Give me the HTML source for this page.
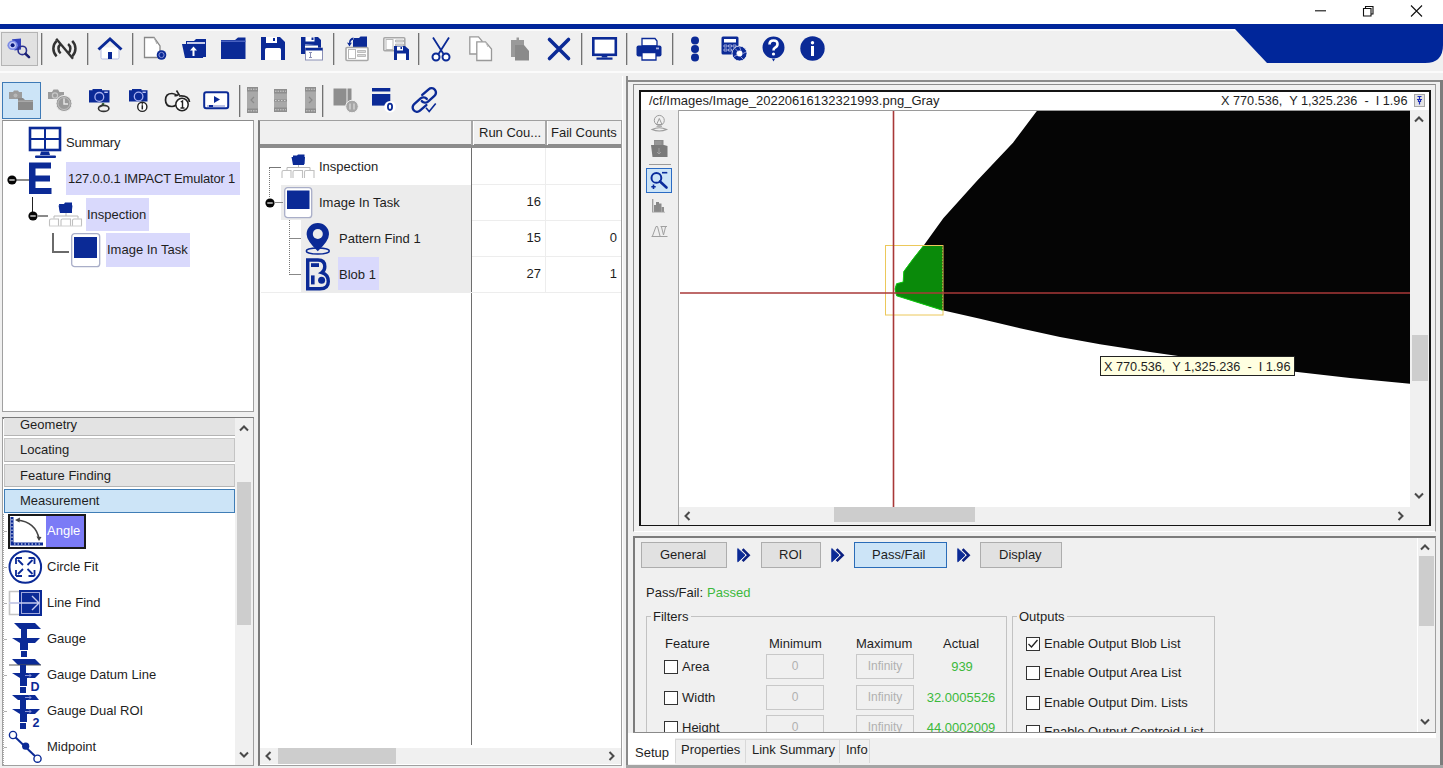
<!DOCTYPE html>
<html><head><meta charset="utf-8">
<style>
*{box-sizing:border-box;margin:0;padding:0}
html,body{width:1443px;height:768px;overflow:hidden}
body{position:relative;background:#f0f0f0;font-family:"Liberation Sans",sans-serif;font-size:13px;color:#1e1e1e}
.a{position:absolute}
.t{position:absolute;white-space:pre;line-height:1}
svg{position:absolute;overflow:visible}
</style></head><body>

<!-- title bar -->
<div class="a" style="left:0;top:0;width:1443px;height:24px;background:#fff"></div>
<svg style="left:1314px;top:5px" width="110" height="14" viewBox="0 0 110 14">
 <path d="M1 5.8H12" stroke="#111" stroke-width="1.1"/>
 <path d="M49.5 3.5h7.5v7.5h-7.5z" fill="none" stroke="#111" stroke-width="1.1"/>
 <path d="M51.5 3.5v-2h7.5v7.5h-2" fill="none" stroke="#111" stroke-width="1.1"/>
 <path d="M97 0.5L108 11.5M108 0.5L97 11.5" stroke="#111" stroke-width="1.1"/>
</svg>
<!-- blue line -->
<div class="a" style="left:0;top:24px;width:1443px;height:5px;background:#00269a"></div>
<div class="a" style="left:0;top:29px;width:1443px;height:2px;background:#fafafa"></div>
<!-- banner -->
<svg style="left:1230px;top:29px" width="213" height="36" viewBox="0 0 213 36">
 <path d="M5 0L37 34H195Q213 34 213 16V0Z" fill="#00269a"/>
</svg>

<!-- toolbars placeholder -->

<!-- TOOLBAR 1 -->
<div class="a" style="left:1px;top:32px;width:37px;height:34px;background:#e1e1e1;border:1px solid #b4b4b4"></div>
<svg style="left:7px;top:37px" width="25" height="23" viewBox="0 0 25 23">
 <path d="M5 2.2L14 1.4L14 12.5L7.5 13.5Z" fill="#3242bd"/>
 <ellipse cx="5.6" cy="8.3" rx="5.2" ry="4.8" fill="#7d8ce6"/>
 <circle cx="5.6" cy="8.3" r="3.3" fill="#c5ccf7"/>
 <circle cx="5.6" cy="8.3" r="2" fill="#0a1a80"/>
 <circle cx="15.3" cy="13.4" r="4.2" fill="none" stroke="#2a3090" stroke-width="1.6"/>
 <path d="M18.6 16.8L22 20.2" stroke="#1a2070" stroke-width="2.6" stroke-linecap="round"/>
</svg>
<div class="a" style="left:41px;top:33px;width:2px;height:32px;background:linear-gradient(90deg,#727272 0 1px,#c8c8c8 1px 2px)"></div>
<svg style="left:52px;top:38px" width="26" height="22" viewBox="0 0 26 22">
 <g fill="none" stroke="#333" stroke-width="2.5">
 <path d="M4.6 2.8A11 11 0 0 0 4.6 18.4"/>
 <path d="M20.2 2.8A11 11 0 0 1 20.2 18.4"/>
 <path d="M8.7 5.9A6 6 0 0 0 8.7 15.3"/>
 <path d="M16.1 5.9A6 6 0 0 1 16.1 15.3"/>
 </g>
 <path d="M4.2 0.8L21 20.8" stroke="#333" stroke-width="2.3"/>
</svg>
<div class="a" style="left:87px;top:33px;width:2px;height:32px;background:linear-gradient(90deg,#727272 0 1px,#c8c8c8 1px 2px)"></div>
<svg style="left:97px;top:37px" width="26" height="23" viewBox="0 0 26 23">
 <path d="M4 10.5V20.5Q4 22 5.5 22H20.5Q22 22 22 20.5V10.5" fill="#fff" stroke="#b7bde0" stroke-width="1"/>
 <path d="M1.5 12.5L13 2L24.5 12.5" fill="none" stroke="#0b2a96" stroke-width="3"/>
 <rect x="11" y="15" width="4" height="7" fill="#0b2a96"/>
</svg>
<div class="a" style="left:132px;top:33px;width:2px;height:32px;background:linear-gradient(90deg,#727272 0 1px,#c8c8c8 1px 2px)"></div>
<svg style="left:143px;top:36px" width="25" height="25" viewBox="0 0 25 25">
 <path d="M1.5 1.5H11L17 10V21.5H1.5Z" fill="#fff" stroke="#888" stroke-width="1.3"/>
 <path d="M11 1.5L14 8" stroke="#aaa" stroke-width="1"/>
 <circle cx="18.5" cy="19" r="4.8" fill="#0b2a96"/>
 <circle cx="18.5" cy="19" r="2.6" fill="none" stroke="#8892d8" stroke-width="1"/>
</svg>
<svg style="left:181px;top:38px" width="27" height="22" viewBox="0 0 27 22">
 <path d="M5 3H13L15 1H25V19H5Z" fill="#0b2a96"/>
 <path d="M6 4H24V6H6Z" fill="#c8cdea"/>
 <path d="M1 6H24L22 20H4Z" fill="#0b2a96"/>
 <path d="M12.5 8.5L9 12.5H11.5V18H13.5V12.5H16Z" fill="#fff"/>
</svg>
<svg style="left:220px;top:37px" width="27" height="23" viewBox="0 0 27 23">
 <path d="M1 3H15L18 0.5H25.5V22H1Z" fill="#0b2a96"/>
 <path d="M1 3.5H25.5V5H1Z" fill="#4a62c0"/>
</svg>
<svg style="left:260px;top:36px" width="26" height="25" viewBox="0 0 26 25">
 <path d="M1 1H20L25 6V24H1Z" fill="#0b2a96"/>
 <rect x="6" y="1" width="11" height="6" fill="#fff"/>
 <rect x="13" y="2" width="2" height="3" fill="#0b2a96"/>
 <path d="M5 13.5Q5 12 6.5 12H19.5Q21 12 21 13.5V24H5Z" fill="#fff"/>
</svg>
<svg style="left:300px;top:36px" width="23" height="25" viewBox="0 0 23 25">
 <path d="M1 1H18L21 4V18H1Z" fill="#0b2a96"/>
 <rect x="5.5" y="1" width="9" height="4.5" fill="#fff"/>
 <rect x="11.5" y="1.5" width="2" height="2.5" fill="#0b2a96"/>
 <path d="M5 9Q5 8.5 5.5 8.5H15" fill="#fff"/>
 <rect x="5" y="9.5" width="13" height="4" fill="#fff"/>
 <rect x="5.5" y="12" width="17" height="12" fill="#fff" stroke="#8a8fb5" stroke-width="1"/>
 <rect x="5.5" y="12" width="17" height="2.5" fill="#0b2a96"/>
 <path d="M9 16.5H12M10.5 16.5V21.5M9 21.5H12" stroke="#8a8fb5" stroke-width="1"/>
</svg>
<div class="a" style="left:333px;top:33px;width:2px;height:32px;background:linear-gradient(90deg,#727272 0 1px,#c8c8c8 1px 2px)"></div>
<svg style="left:345px;top:35px" width="25" height="27" viewBox="0 0 25 27">
 <path d="M9 3H14L15.5 1.5H22V11H9Z" fill="#0b2a96"/>
 <path d="M8 4.5H22V12H8Z" fill="#0b2a96"/>
 <path d="M8.5 2.5Q4 3 4 8L2 7.5L4.5 11.5L7 7.5L5.5 8Q5.5 5 8.5 4.5Z" fill="#0b2a96"/>
 <rect x="1" y="12.5" width="22" height="13" fill="#fff" stroke="#a8a8a8" stroke-width="1.6" rx="1"/>
 <rect x="3.5" y="14.5" width="7" height="9" fill="#fff" stroke="#b8b8b8" stroke-width="1"/>
 <path d="M12.5 15.5h8v2h-8zM12.5 19.5h8v2h-8z" fill="#d8d8d8" stroke="#b0b0b0" stroke-width="0.8"/>
</svg>
<svg style="left:383px;top:37px" width="27" height="23" viewBox="0 0 27 23">
 <rect x="0.8" y="0.8" width="21" height="13" fill="#fff" stroke="#a8a8a8" stroke-width="1.6" rx="1"/>
 <rect x="3" y="2.5" width="7" height="10" fill="#fff" stroke="#b8b8b8" stroke-width="1"/>
 <path d="M12.5 3h8v2h-8zM12.5 7h8v2h-8z" fill="#d8d8d8" stroke="#b0b0b0" stroke-width="0.8"/>
 <path d="M11 9H22L26 12.5V23H11Z" fill="#0b2a96"/>
 <rect x="14" y="9.5" width="6" height="4" fill="#fff"/>
 <rect x="17.5" y="10" width="1.5" height="2" fill="#0b2a96"/>
 <rect x="14" y="16.5" width="9" height="6.5" fill="#fff"/>
</svg>
<div class="a" style="left:418px;top:33px;width:2px;height:32px;background:linear-gradient(90deg,#727272 0 1px,#c8c8c8 1px 2px)"></div>
<svg style="left:431px;top:37px" width="20" height="25" viewBox="0 0 20 25">
 <path d="M2 0.5L12.5 17M18 0.5L7.5 17" stroke="#0b2a96" stroke-width="1.8"/>
 <circle cx="5" cy="20" r="3.5" fill="#fff" stroke="#0b2a96" stroke-width="2"/>
 <circle cx="15" cy="20" r="3.5" fill="#fff" stroke="#0b2a96" stroke-width="2"/>
</svg>
<svg style="left:469px;top:36px" width="24" height="26" viewBox="0 0 24 26">
 <path d="M0.8 0.8H9.5L13 5V18H0.8Z" fill="#fff" stroke="#999" stroke-width="1.3"/>
 <path d="M7.8 5.8H16.5L22.5 13V24.5H7.8Z" fill="#fff" stroke="#999" stroke-width="1.3"/>
 <path d="M16.5 5.8L19 11" stroke="#bbb" stroke-width="1"/>
</svg>
<svg style="left:510px;top:36px" width="20" height="26" viewBox="0 0 20 26">
 <path d="M1 4H6.5V1.5H9V4H14V21H1Z" fill="#9a9a9a"/>
 <path d="M5 9H14L19 15V24.5H5Z" fill="#8a8a8a"/>
</svg>
<svg style="left:547px;top:37px" width="24" height="24" viewBox="0 0 24 24">
 <path d="M2.5 2.5L21.5 21.5M21.5 2.5L2.5 21.5" stroke="#0b2a96" stroke-width="3.6" stroke-linecap="round"/>
</svg>
<div class="a" style="left:581px;top:33px;width:2px;height:32px;background:linear-gradient(90deg,#727272 0 1px,#c8c8c8 1px 2px)"></div>
<svg style="left:592px;top:37px" width="26" height="24" viewBox="0 0 26 24">
 <rect x="1.3" y="1.3" width="22.5" height="16.5" fill="#fff" stroke="#0b2a96" stroke-width="2.6"/>
 <path d="M10 18H15L15.5 20.5H9.5Z" fill="#0b2a96"/>
 <rect x="4.5" y="20.5" width="16" height="2.2" fill="#0b2a96"/>
</svg>
<div class="a" style="left:626px;top:33px;width:2px;height:32px;background:linear-gradient(90deg,#727272 0 1px,#c8c8c8 1px 2px)"></div>
<svg style="left:636px;top:37px" width="27" height="24" viewBox="0 0 27 24">
 <path d="M6 1.5H19L21 4V9H6Z" fill="#fff" stroke="#0b2a96" stroke-width="1.3"/>
 <rect x="0.5" y="8.5" width="25" height="11" rx="2" fill="#0b2a96"/>
 <rect x="20" y="10.5" width="3" height="1.8" fill="#a8b0e0"/>
 <path d="M6 15.5H20V23H6Z" fill="#fff" stroke="#0b2a96" stroke-width="1.3"/>
</svg>
<div class="a" style="left:672px;top:33px;width:2px;height:32px;background:linear-gradient(90deg,#727272 0 1px,#c8c8c8 1px 2px)"></div>
<svg style="left:690px;top:36px" width="10" height="26" viewBox="0 0 10 26">
 <circle cx="5" cy="4.5" r="4" fill="#0b2a96"/><circle cx="5" cy="13" r="4" fill="#0b2a96"/><circle cx="5" cy="21.5" r="4" fill="#0b2a96"/>
</svg>
<svg style="left:721px;top:36px" width="27" height="26" viewBox="0 0 27 26">
 <rect x="0.5" y="0.5" width="17" height="18" rx="1.5" fill="#0b2a96"/>
 <rect x="3" y="3" width="12" height="3.5" fill="#fff"/>
 <path d="M3 9h3v2h-3zM7.5 9h3v2h-3zM12 9h3v2h-3zM3 13h3v2h-3zM7.5 13h3v2h-3z" fill="none" stroke="#a8b0e0" stroke-width="0.9"/>
 <circle cx="18.5" cy="17.5" r="7.5" fill="#0b2a96" stroke="#fff" stroke-width="0.8"/>
 <circle cx="18.5" cy="17.5" r="3" fill="#fff"/>
 <path d="M18.5 10.5L20 15M25 16L21 18M22 23L19 20M13 20.5L16.5 19M14 12.5L17 15.5" stroke="#8c95d6" stroke-width="1"/>
</svg>
<svg style="left:762px;top:36px" width="23" height="26" viewBox="0 0 23 26">
 <path d="M11.5 0.5A11 11 0 1 1 11.5 22.5A11 11 0 1 1 11.5 0.5Z M9.5 22L11.5 25.5L13.5 22Z" fill="#0b2a96"/>
 <path d="M7.5 8.5Q7.5 4.5 11.5 4.5Q15.5 4.5 15.5 8Q15.5 10.5 12.8 11.8Q11.5 12.5 11.5 14.5" fill="none" stroke="#fff" stroke-width="2.6"/>
 <circle cx="11.5" cy="18" r="1.6" fill="#fff"/>
</svg>
<svg style="left:800px;top:36px" width="25" height="25" viewBox="0 0 25 25">
 <circle cx="12.5" cy="12.5" r="12.2" fill="#0b2a96"/>
 <rect x="11" y="10" width="3" height="10" fill="#fff"/>
 <circle cx="12.5" cy="6.8" r="1.7" fill="#fff"/>
</svg>

<div class="a" style="left:0;top:71px;width:1443px;height:2px;background:#fbfbfb"></div>

<!-- TOOLBAR 2 -->
<div class="a" style="left:2px;top:82px;width:39px;height:37px;background:#cce4f7;border:1px solid #3e7ab6"></div>
<svg style="left:8px;top:89px" width="26" height="22" viewBox="0 0 26 22">
 <path d="M1 3H5L6 1.5H10L11 3H14V10H1Z" fill="#9c9c9c"/>
 <circle cx="7.5" cy="6.5" r="2" fill="#b8b8b8"/>
 <path d="M10 9H15L17 11H25V21H10Z" fill="#8a8a8a"/>
 <path d="M10 11.5H25V13H10Z" fill="#a8a8a8"/>
</svg>
<svg style="left:47px;top:88px" width="26" height="24" viewBox="0 0 26 24">
 <path d="M1 4H5L6.5 1.5H11L12.5 4H17V11H1Z" fill="#9c9c9c"/>
 <circle cx="8" cy="7.5" r="2.6" fill="none" stroke="#c8c8c8" stroke-width="1.2"/>
 <circle cx="17" cy="15.5" r="8" fill="#9a9a9a" stroke="#f0f0f0" stroke-width="1"/>
 <circle cx="17" cy="15.5" r="6" fill="none" stroke="#c8c8c8" stroke-width="0.8"/>
 <path d="M17 10.5V16H21" fill="none" stroke="#e8e8e8" stroke-width="1.4"/>
</svg>
<svg style="left:89px;top:88px" width="22" height="25" viewBox="0 0 22 25">
 <path d="M0 2.3H3.5V1H13V2.3H20.5V14.4H0Z" fill="#0b2a96"/>
 <rect x="15.3" y="3.6" width="3.5" height="1.3" fill="#cfd5ff"/>
 <circle cx="10.3" cy="8.9" r="4.4" fill="none" stroke="#a8b0f0" stroke-width="1.3"/>
 <ellipse cx="14.7" cy="20.4" rx="5.2" ry="3" fill="none" stroke="#333" stroke-width="1.6"/>
 <path d="M11 19L14.5 15.8" stroke="#333" stroke-width="1.6"/>
 <path d="M12.5 15.2L15.3 15L15 17.8Z" fill="#2a5a2a"/>
</svg>
<svg style="left:129px;top:88px" width="20" height="25" viewBox="0 0 20 25">
 <path d="M0 2.3H3V1H12.5V2.3H18.5V13.5H0Z" fill="#0b2a96"/>
 <rect x="13.5" y="3.6" width="3.3" height="1.3" fill="#cfd5ff"/>
 <circle cx="9.6" cy="8.5" r="4.3" fill="none" stroke="#a8b0f0" stroke-width="1.3"/>
 <circle cx="13.3" cy="18.8" r="4.6" fill="#fff" stroke="#222" stroke-width="1.4"/>
 <path d="M13.3 17.2V21.4" stroke="#222" stroke-width="1.5"/>
 <circle cx="13.3" cy="15.9" r="0.8" fill="#222"/>
</svg>
<svg style="left:164px;top:90px" width="27" height="22" viewBox="0 0 27 22">
 <path d="M13.5 6Q11 3.5 8 3.5Q1.5 3.5 1.5 10Q1.5 16.5 8 16.5Q10 16.5 12 15" fill="none" stroke="#222" stroke-width="1.7"/>
 <path d="M12.5 0.5L15 4.5L10.5 6" fill="none" stroke="#222" stroke-width="1.6"/>
 <path d="M15 6Q24.5 5 25.5 12" fill="none" stroke="#222" stroke-width="1.7"/>
 <circle cx="18" cy="14.5" r="6.2" fill="#fff" stroke="#222" stroke-width="1.5"/>
 <path d="M16.8 12L18.5 11V18M16.5 18H20.5" fill="none" stroke="#222" stroke-width="1.4"/>
</svg>
<svg style="left:203px;top:91px" width="27" height="19" viewBox="0 0 27 19">
 <rect x="1.2" y="1.2" width="24" height="16" rx="2" fill="#fff" stroke="#0b2a96" stroke-width="2"/>
 <path d="M11 5L17 8.5L11 12Z" fill="#0b2a96"/>
 <path d="M4 15H22" stroke="#7a86cc" stroke-width="1"/>
 <rect x="6" y="14" width="4" height="2" fill="#0b2a96"/>
</svg>
<div class="a" style="left:239px;top:85px;width:2px;height:32px;background:linear-gradient(90deg,#727272 0 1px,#c8c8c8 1px 2px)"></div>
<svg style="left:247px;top:87px" width="11" height="26" viewBox="0 0 11 26">
 <rect x="0" y="0" width="11" height="26" fill="#a9a9a9"/>
 <rect x="0" y="0" width="11" height="4.5" fill="#8e8e8e"/>
 <rect x="0" y="21.5" width="11" height="4.5" fill="#8e8e8e"/>
 <path d="M1 2.2H10M1 23.8H10" stroke="#cfcfcf" stroke-width="1" stroke-dasharray="1.5 1"/>
 <path d="M7.0 10.0L4.0 13.0L7.0 16.0" fill="none" stroke="#8a8a8a" stroke-width="1.2"/>
</svg>
<svg style="left:274px;top:89px" width="13" height="23" viewBox="0 0 13 23">
 <rect x="0" y="0" width="13" height="23" fill="#a9a9a9"/>
 <rect x="0" y="0" width="13" height="4.5" fill="#8e8e8e"/>
 <rect x="0" y="18.5" width="13" height="4.5" fill="#8e8e8e"/>
 <path d="M1 2.2H12M1 20.8H12" stroke="#cfcfcf" stroke-width="1" stroke-dasharray="1.5 1"/>
 <path d="M0 11.5H13" stroke="#8c8c8c" stroke-width="2"/><path d="M1 11.5H12" stroke="#d0d0d0" stroke-width="1" stroke-dasharray="1.5 1.5"/>
</svg>
<svg style="left:305px;top:87px" width="11" height="26" viewBox="0 0 11 26">
 <rect x="0" y="0" width="11" height="26" fill="#a9a9a9"/>
 <rect x="0" y="0" width="11" height="4.5" fill="#8e8e8e"/>
 <rect x="0" y="21.5" width="11" height="4.5" fill="#8e8e8e"/>
 <path d="M1 2.2H10M1 23.8H10" stroke="#cfcfcf" stroke-width="1" stroke-dasharray="1.5 1"/>
 <path d="M4.0 10.0L7.0 13.0L4.0 16.0" fill="none" stroke="#8a8a8a" stroke-width="1.2"/>
</svg>
<div class="a" style="left:322px;top:85px;width:2px;height:32px;background:linear-gradient(90deg,#727272 0 1px,#c8c8c8 1px 2px)"></div>
<svg style="left:333px;top:88px" width="26" height="26" viewBox="0 0 26 26">
 <rect x="0.5" y="0.5" width="13" height="17" fill="#8e8e8e"/>
 <rect x="14.5" y="0.5" width="4" height="17" fill="#8e8e8e"/>
 <circle cx="19" cy="18.5" r="6.3" fill="#a6a6a6" stroke="#f0f0f0" stroke-width="1"/>
 <path d="M17 15.5v6M21 15.5v6" stroke="#cfcfcf" stroke-width="1.6"/>
</svg>
<svg style="left:372px;top:87px" width="25" height="26" viewBox="0 0 25 26">
 <rect x="0" y="1" width="18.3" height="3.5" fill="#0b2a96"/>
 <rect x="0" y="7" width="18.3" height="11.6" fill="#0b2a96"/>
 <circle cx="18" cy="19.8" r="5.8" fill="#fff"/>
 <ellipse cx="18" cy="19.8" rx="2.1" ry="3.2" fill="none" stroke="#0b2a96" stroke-width="1.8"/>
</svg>
<svg style="left:411px;top:87px" width="27" height="27" viewBox="0 0 27 27">
 <g transform="translate(13.3 13.0) rotate(-41)" fill="none" stroke="#0b2a96" stroke-width="2.4" stroke-linecap="round">
  <path transform="translate(0 -0.8)" d="M1.8 -4.4H10.3A4.4 4.4 0 0 1 10.3 4.4H1.8A4.4 4.4 0 0 1 -2.6000000000000005 0"/>
  <path transform="translate(0 0.8)" d="M-1.8 4.4H-10.3A4.4 4.4 0 0 1 -10.3 -4.4H-1.8A4.4 4.4 0 0 1 2.6000000000000005 0"/>
 </g>
 <path d="M15 20.7L18.2 24.6L24.7 16.6" fill="none" stroke="#f0f0f0" stroke-width="4"/>
 <path d="M15 20.7L18.2 24.6L24.7 16.6" fill="none" stroke="#0b2a96" stroke-width="1.6"/>
</svg>


<!-- LEFT TOP TREE PANEL -->
<div class="a" style="left:2px;top:120px;width:252px;height:292px;background:#fff;border:1px solid #a0a0a0;border-top-color:#8c8c8c"></div>

<!-- TREE -->
<svg style="left:28px;top:126px" width="36" height="33" viewBox="0 0 36 33">
 <rect x="2" y="2" width="30" height="22" fill="#fff" stroke="#0b2a96" stroke-width="2.6"/>
 <path d="M17 2V24M2 13H32" stroke="#0b2a96" stroke-width="2"/>
 <path d="M13 25.5H21L22 29H12Z" fill="#0b2a96"/>
 <rect x="7" y="29.5" width="21" height="2.5" rx="1" fill="#0b2a96"/>
</svg>
<div class="t" style="left:66px;top:136px;letter-spacing:-0.2px">Summary</div>
<div class="a" style="left:66px;top:162px;width:174px;height:33px;background:#d9d9fc"></div>
<div class="t" style="left:68px;top:172px;letter-spacing:-0.19px">127.0.0.1 IMPACT Emulator 1</div>
<div class="a" style="left:16px;top:179px;width:13px;height:1.5px;background:#8a8a8a"></div>
<svg style="left:7px;top:175px" width="10" height="10" viewBox="0 0 10 10"><circle cx="5" cy="5" r="4.6" fill="#050505"/><rect x="2.3" y="4.2" width="5.4" height="1.6" fill="#bdbdbd"/></svg>
<svg style="left:29px;top:162px" width="23" height="33" viewBox="0 0 23 33">
 <path d="M0 0.5H22V6.5H6.5V13.5H21V19.5H6.5V26H22.5V32H0Z" fill="#0b2a96"/>
</svg>
<div class="a" style="left:31.5px;top:197px;width:1.5px;height:15px;background:#222"></div>
<svg style="left:28px;top:211px" width="10" height="10" viewBox="0 0 10 10"><circle cx="5" cy="5" r="4.6" fill="#050505"/><rect x="2.3" y="4.2" width="5.4" height="1.6" fill="#bdbdbd"/></svg>
<div class="a" style="left:37px;top:215px;width:11px;height:1.5px;background:#8a8a8a"></div>
<svg style="left:48px;top:202px" width="36" height="25" viewBox="0 0 36 25">
 <path d="M11 2H16L17 0.5H24V11H12Z" fill="#0b2a96"/>
 <path d="M10.5 3.5H24.5L23.5 11H12Z" fill="#0b2a96"/>
 <path d="M6 16.5V14H30V16.5M18 11V14" fill="none" stroke="#b8b8b8" stroke-width="1"/>
 <path d="M1.5 24V18.5Q1.5 17 3 17H10.5V24M13 24V18.5Q13 17 14.5 17H22.5V24M24.5 24V18.5Q24.5 17 26 17H33.5V24" fill="none" stroke="#c0c0c0" stroke-width="1.1"/>
 <path d="M1 24H34" stroke="#d0d0d0" stroke-width="1"/>
</svg>
<div class="a" style="left:86px;top:198px;width:63px;height:33px;background:#d9d9fc"></div>
<div class="t" style="left:87px;top:208px">Inspection</div>
<div class="a" style="left:52px;top:233px;width:1.5px;height:19px;background:#6a6a6a"></div>
<div class="a" style="left:52px;top:251px;width:17px;height:1.5px;background:#6a6a6a"></div>
<svg style="left:71px;top:233px" width="30" height="35" viewBox="0 0 30 35">
 <rect x="0.7" y="0.7" width="28" height="33" rx="3" fill="#fff" stroke="#a9aec8" stroke-width="1.3"/>
 <rect x="3" y="4" width="23" height="21" fill="#0b2a96"/>
</svg>
<div class="a" style="left:106px;top:233px;width:84px;height:34px;background:#d9d9fc"></div>
<div class="t" style="left:107px;top:243px">Image In Task</div>


<!-- LEFT BOTTOM TOOL LIST -->
<div class="a" style="left:2px;top:417px;width:252px;height:349px;background:#fff;border:1px solid #a0a0a0;border-top:2px solid #7a7a7a"></div>

<!-- TOOL LIST -->
<div class="a" style="left:4px;top:418px;width:231px;height:18px;background:#e3e3e3;border-bottom:1px solid #b4b4b4"></div>
<div class="t" style="left:20px;top:418px">Geometry</div>
<div class="a" style="left:4px;top:438px;width:231px;height:24px;background:#e3e3e3;border:1px solid #c4c4c4;border-top-color:#c8c8c8;border-bottom-color:#b4b4b4"></div>
<div class="t" style="left:20px;top:443px">Locating</div>
<div class="a" style="left:4px;top:464px;width:231px;height:23px;background:#e3e3e3;border:1px solid #c4c4c4;border-bottom-color:#b4b4b4"></div>
<div class="t" style="left:20px;top:469px">Feature Finding</div>
<div class="a" style="left:4px;top:489px;width:231px;height:24px;background:#cce4f7;border:1px solid #3f7db6"></div>
<div class="t" style="left:20px;top:494px">Measurement</div>
<!-- scrollbar -->
<div class="a" style="left:235px;top:418px;width:18px;height:347px;background:#f0f0f0"></div>
<div class="a" style="left:237px;top:482px;width:14px;height:143px;background:#cdcdcd"></div>
<svg style="left:239px;top:425px" width="10" height="6" viewBox="0 0 10 6"><path d="M1 5.5L5 1.5L9 5.5" fill="none" stroke="#4a4a4a" stroke-width="2"/></svg>
<svg style="left:239px;top:752px" width="10" height="6" viewBox="0 0 10 6"><path d="M1 0.5L5 4.5L9 0.5" fill="none" stroke="#4a4a4a" stroke-width="2"/></svg>
<div class="a" style="left:3px;top:514px;width:1px;height:251px;border-left:1px dotted #a8a8a8"></div>
<div class="a" style="left:4px;top:531px;width:3px;height:1px;background:#b0b0b0"></div><div class="a" style="left:4px;top:567px;width:3px;height:1px;background:#b0b0b0"></div><div class="a" style="left:4px;top:603px;width:3px;height:1px;background:#b0b0b0"></div><div class="a" style="left:4px;top:639px;width:3px;height:1px;background:#b0b0b0"></div><div class="a" style="left:4px;top:675px;width:3px;height:1px;background:#b0b0b0"></div><div class="a" style="left:4px;top:711px;width:3px;height:1px;background:#b0b0b0"></div><div class="a" style="left:4px;top:747px;width:3px;height:1px;background:#b0b0b0"></div>
<!-- Angle -->
<div class="a" style="left:8px;top:514px;width:78px;height:35px;border:2px solid #1a1a1a;background:#7b7bf6"></div>
<div class="a" style="left:10px;top:516px;width:36px;height:31px;background:#fff"></div>
<svg style="left:10px;top:516px" width="36" height="31" viewBox="0 0 36 31">
 <path d="M2 1V28H33" fill="none" stroke="#0b2a96" stroke-width="3"/>
 <path d="M2 3V27M4 28H32" fill="none" stroke="#fff" stroke-width="1" stroke-dasharray="1.5 2"/>
 <path d="M7 4Q26 6 29 23" fill="none" stroke="#444" stroke-width="1.6"/>
 <path d="M5 4L10 1.5L9.5 6.5Z M29 25L26.5 20.5L31.5 21Z" fill="#444"/>
</svg>
<div class="t" style="left:47px;top:524px;color:#fff">Angle</div>
<!-- Circle Fit -->
<svg style="left:8px;top:549px" width="35" height="36" viewBox="0 0 35 36">
 <circle cx="17.3" cy="18" r="15.8" fill="none" stroke="#0b2a96" stroke-width="2"/>
 <path d="M10 11L15 16M24.5 11L19.5 16M10 25L15 20M24.5 25L19.5 20" stroke="#0b2a96" stroke-width="1.8"/>
 <path d="M8 9h6M8 9v6M26.5 9h-6M26.5 9v6M8 27h6M8 27v-6M26.5 27h-6M26.5 27v-6" stroke="#0b2a96" stroke-width="1.8"/>
</svg>
<div class="t" style="left:47px;top:560px">Circle Fit</div>
<!-- Line Find -->
<svg style="left:8px;top:589px" width="36" height="28" viewBox="0 0 36 28">
 <path d="M1.5 2.5H12V25.5H1.5Z M1.5 14H12" fill="#fff" stroke="#c4c4c4" stroke-width="1.6"/>
 <rect x="11" y="1" width="23" height="26" fill="#0b2a96"/>
 <rect x="13.5" y="3.5" width="18" height="21" fill="none" stroke="#a0a8dc" stroke-width="1"/>
 <path d="M1 14H31M24 7L31 14L24 21" fill="none" stroke="#c8cdef" stroke-width="1.4"/>
</svg>
<div class="t" style="left:47px;top:596px">Line Find</div>
<!-- Gauge -->
<svg style="left:9px;top:622px" width="34" height="36" viewBox="0 0 34 36">
 <path d="M5 1H26L32 7H11Z" fill="#0b2a96"/>
 <rect x="12" y="7" width="6" height="9" fill="#0b2a96"/>
 <path d="M3 16H31L26 21H11Z" fill="#0b2a96"/>
 <rect x="11" y="20" width="8" height="8" fill="#0b2a96"/>
 <rect x="12" y="29" width="6" height="6" fill="#0b2a96"/>
</svg>
<div class="t" style="left:47px;top:632px">Gauge</div>
<!-- Gauge Datum Line -->
<svg style="left:9px;top:658px" width="34" height="36" viewBox="0 0 34 36">
 <path d="M3 1H26L32 7H9Z" fill="#0b2a96"/>
 <path d="M0 7H32" stroke="#555" stroke-width="1"/>
 <rect x="11" y="7" width="6" height="9" fill="#0b2a96"/>
 <path d="M3 15H31L26 20H11Z" fill="#0b2a96"/>
 <path d="M16 17.5H22M20 15.5L22 17.5L20 19.5" fill="none" stroke="#8d97d8" stroke-width="1"/>
 <rect x="11" y="20" width="7" height="8" fill="#0b2a96"/>
 <rect x="11" y="29" width="6" height="6" fill="#0b2a96"/>
 <text x="21.5" y="32.5" font-family="Liberation Sans" font-size="12.5" font-weight="bold" fill="#0b2a96">D</text>
</svg>
<div class="t" style="left:47px;top:668px">Gauge Datum Line</div>
<!-- Gauge Dual ROI -->
<svg style="left:9px;top:694px" width="34" height="36" viewBox="0 0 34 36">
 <path d="M3 1H26L30 6H9Z" fill="#0b2a96"/>
 <rect x="11" y="6" width="6" height="9" fill="#0b2a96"/>
 <path d="M16 3.5H22M20 1.5L22 3.5L20 5.5" fill="none" stroke="#8d97d8" stroke-width="1"/>
 <path d="M3 15H31L26 20H11Z" fill="#0b2a96"/>
 <path d="M16 17.5H22M20 15.5L22 17.5L20 19.5" fill="none" stroke="#8d97d8" stroke-width="1"/>
 <rect x="11" y="20" width="7" height="8" fill="#0b2a96"/>
 <rect x="11" y="29" width="6" height="6" fill="#0b2a96"/>
 <text x="23.5" y="32.5" font-family="Liberation Sans" font-size="12.5" font-weight="bold" fill="#0b2a96">2</text>
</svg>
<div class="t" style="left:47px;top:704px">Gauge Dual ROI</div>
<!-- Midpoint -->
<svg style="left:8px;top:730px" width="36" height="35" viewBox="0 0 36 35">
 <path d="M5 5L29 28" stroke="#0b2a96" stroke-width="2"/>
 <circle cx="5" cy="5" r="3.6" fill="#fff" stroke="#0b2a96" stroke-width="1.4"/>
 <circle cx="17.7" cy="16.2" r="3.6" fill="#0b2a96"/>
 <circle cx="29.5" cy="28.7" r="3.6" fill="#fff" stroke="#0b2a96" stroke-width="1.4"/>
</svg>
<div class="t" style="left:47px;top:740px">Midpoint</div>


<!-- MIDDLE TABLE PANEL -->
<div class="a" style="left:258px;top:120px;width:364px;height:646px;background:#fff;border:1px solid #a0a0a0;border-left:2px solid #7a7a7a"></div>

<!-- TABLE -->
<div class="a" style="left:260px;top:121px;width:361px;height:24px;background:#f0f0f0"></div>
<div class="a" style="left:260px;top:144px;width:361px;height:4px;background:#8c8c8c"></div>
<div class="a" style="left:471px;top:121px;width:2px;height:24px;background:#a8a8a8"></div>
<div class="a" style="left:545px;top:121px;width:2px;height:24px;background:#a8a8a8"></div>
<div class="a" style="left:473px;top:121px;width:1px;height:24px;background:#fff"></div>
<div class="a" style="left:547px;top:121px;width:1px;height:24px;background:#fff"></div>
<div class="t" style="left:479px;top:126px">Run Cou...</div>
<div class="t" style="left:551px;top:126px">Fail Counts</div>
<!-- column lines -->
<div class="a" style="left:471px;top:148px;width:1px;height:597px;background:#6e6e6e"></div>
<div class="a" style="left:545px;top:148px;width:1px;height:145px;background:#ededed"></div>
<div class="a" style="left:472px;top:184px;width:149px;height:1px;background:#ededed"></div>
<div class="a" style="left:472px;top:220px;width:149px;height:1px;background:#ededed"></div>
<div class="a" style="left:472px;top:256px;width:149px;height:1px;background:#ededed"></div>
<div class="a" style="left:261px;top:292px;width:360px;height:1px;background:#ededed"></div>
<!-- gray rows -->
<div class="a" style="left:281px;top:185px;width:190px;height:35px;background:#ececec"></div>
<div class="a" style="left:301px;top:220px;width:170px;height:73px;background:#ececec"></div>
<div class="a" style="left:338px;top:257px;width:41px;height:33px;background:#d9d9fc"></div>
<!-- dotted lines -->
<div class="a" style="left:269px;top:167px;width:12px;height:1px;background:#777"></div>
<div class="a" style="left:269px;top:167px;width:1px;height:30px;border-left:1px dotted #777"></div>
<div class="a" style="left:275px;top:202px;width:8px;height:1px;background:#888"></div>
<div class="a" style="left:289px;top:220px;width:1px;height:55px;border-left:1px dotted #777"></div>
<div class="a" style="left:290px;top:238px;width:11px;height:1px;background:#888"></div>
<div class="a" style="left:290px;top:274px;width:11px;height:1px;background:#888"></div>
<svg style="left:265px;top:198px" width="10" height="10" viewBox="0 0 10 10"><circle cx="5" cy="5" r="4.6" fill="#050505"/><rect x="2.3" y="4.2" width="5.4" height="1.6" fill="#bdbdbd"/></svg>
<!-- inspection icon -->
<svg style="left:281px;top:154px" width="35" height="25" viewBox="0 0 35 25">
 <path d="M12 1.5H16L17 0.5H23.5V10H12Z" fill="#0b2a96"/>
 <path d="M10.5 3H24L23 11H12Z" fill="#0b2a96"/>
 <path d="M6 16V13.5H29V16M17.5 11V13.5" fill="none" stroke="#b8b8b8" stroke-width="1"/>
 <path d="M1 24V18Q1 16.5 2.5 16.5H10V24M12 24V18Q12 16.5 13.5 16.5H21.5V24M23.5 24V18Q23.5 16.5 25 16.5H33V24" fill="none" stroke="#c0c0c0" stroke-width="1.1"/>
</svg>
<div class="t" style="left:319px;top:160px">Inspection</div>
<svg style="left:284px;top:187px" width="29" height="32" viewBox="0 0 29 32">
 <rect x="0.7" y="0.7" width="27" height="30" rx="3" fill="#fff" stroke="#a9aec8" stroke-width="1.3"/>
 <rect x="3" y="3.5" width="22.5" height="18.5" fill="#0b2a96"/>
</svg>
<div class="t" style="left:319px;top:196px">Image In Task</div>
<div class="t" style="left:541px;top:195px;transform:translateX(-100%)">16</div>
<svg style="left:305px;top:222px" width="26" height="33" viewBox="0 0 26 33">
 <path d="M12.8 1A11.2 11.2 0 0 1 24 12.2Q24 18.5 12.8 29.3Q1.6 18.5 1.6 12.2A11.2 11.2 0 0 1 12.8 1Z" fill="#0b2a96"/>
 <circle cx="12.8" cy="12" r="5" fill="#ececec"/>
 <ellipse cx="12.8" cy="29" rx="11.5" ry="3" fill="none" stroke="#0b2a96" stroke-width="1.5"/>
</svg>
<div class="t" style="left:339px;top:232px">Pattern Find 1</div>
<div class="t" style="left:541px;top:231px;transform:translateX(-100%)">15</div>
<div class="t" style="left:617px;top:231px;transform:translateX(-100%)">0</div>
<svg style="left:305px;top:258px" width="26" height="33" viewBox="0 0 26 33">
 <path d="M2.7 2H13Q19.8 2 19.8 8.5Q19.8 12.5 16.8 14.6Q23.3 16.5 23.3 23.5Q23.3 30.8 15 30.8H2.7Z" fill="none" stroke="#0b2a96" stroke-width="3.4"/>
 <rect x="6" y="5.2" width="8" height="3.8" fill="#0b2a96"/>
 <rect x="6" y="17.4" width="3.6" height="9" fill="#0b2a96"/>
 <circle cx="16.6" cy="22.3" r="3.5" fill="#0b2a96"/>
</svg>
<div class="t" style="left:339px;top:268px">Blob 1</div>
<div class="t" style="left:541px;top:267px;transform:translateX(-100%)">27</div>
<div class="t" style="left:617px;top:267px;transform:translateX(-100%)">1</div>
<!-- h scrollbar -->
<div class="a" style="left:260px;top:745px;width:361px;height:3px;background:#fff"></div>
<div class="a" style="left:260px;top:748px;width:361px;height:16px;background:#f0f0f0"></div>
<div class="a" style="left:278px;top:748px;width:118px;height:16px;background:#cdcdcd"></div>
<svg style="left:265px;top:751px" width="6" height="10" viewBox="0 0 6 10"><path d="M5.5 1L1.5 5L5.5 9" fill="none" stroke="#4a4a4a" stroke-width="2"/></svg>
<svg style="left:609px;top:751px" width="6" height="10" viewBox="0 0 6 10"><path d="M0.5 1L4.5 5L0.5 9" fill="none" stroke="#4a4a4a" stroke-width="2"/></svg>


<!-- RIGHT PANEL -->

<!-- right frame lines -->
<div class="a" style="left:622px;top:76px;width:1px;height:692px;background:#fff"></div>
<div class="a" style="left:626px;top:76px;width:2px;height:690px;background:#8a8a8a"></div>
<div class="a" style="left:627px;top:80px;width:816px;height:2px;background:#8a8a8a"></div>
<div class="a" style="left:1440px;top:80px;width:3px;height:688px;background:#7c7c7c"></div>
<div class="a" style="left:626px;top:765px;width:817px;height:3px;background:#a4a4a4"></div>
<!-- image section frame -->
<div class="a" style="left:633px;top:84px;width:803px;height:448px;border:1px solid #8c8c8c;border-bottom-color:#fff;border-right-color:#a0a0a0"></div>
<!-- image viewer black box -->
<div class="a" style="left:639px;top:90px;width:792px;height:436px;border:2px solid #141414;background:#fff"></div>
<div class="t" style="left:649px;top:94px;font-size:13px">/cf/Images/Image_20220616132321993.png_Gray</div>
<div class="t" style="left:1221px;top:94px;font-size:13px"><span style="font-size:12.7px">X 770.536,  Y 1,325.236  -  I 1.96</span></div>
<div class="a" style="left:1414px;top:94px;width:11px;height:13px;background:#e4e4e4;border:1px solid #a8a8a8"></div>
<svg style="left:1415px;top:95px" width="9" height="11" viewBox="0 0 9 11"><path d="M2.5 1.5h4M4.5 1.5v3M2 4.5h5M3.5 4.5v2h2v-2M4.5 6.5v3" stroke="#1a2cb8" stroke-width="1.2" fill="none"/></svg>
<!-- toolstrip -->
<div class="a" style="left:641px;top:110px;width:38px;height:415px;background:#efefef;border-right:1px solid #a8a8a8"></div>
<svg style="left:650px;top:114px" width="18" height="18" viewBox="0 0 18 18">
 <circle cx="9.3" cy="6.4" r="5" fill="none" stroke="#9c9c9c" stroke-width="1"/>
 <path d="M9.3 4.5L6.6 10.5H12Z" fill="none" stroke="#9c9c9c" stroke-width="1"/>
 <path d="M2 15.5Q9.3 12 16.7 15.5Q9.3 18.5 2 15.5Z" fill="none" stroke="#9c9c9c" stroke-width="1.1"/>
 <path d="M6.5 12.5H12" stroke="#b0b0b0" stroke-width="1"/>
</svg>
<svg style="left:651px;top:140px" width="17" height="17" viewBox="0 0 17 17">
 <rect x="3" y="0" width="9.5" height="6" fill="#8a8a8a"/>
 <path d="M0 5H13L16.5 6V17H1.5Z" fill="#7a7a7a"/>
 <path d="M3.5 2h7M3.5 4h7M8 8v6M6 12l2 2l2-2" stroke="#a8a8a8" stroke-width="0.8" fill="none"/>
</svg>
<div class="a" style="left:649px;top:164px;width:22px;height:1px;background:#9a9a9a"></div>
<div class="a" style="left:646px;top:168px;width:26px;height:25px;background:#cce4f7;border:1px solid #2a6bc4"></div>
<svg style="left:646px;top:168px" width="26" height="25" viewBox="0 0 26 25">
 <circle cx="10.4" cy="9.9" r="4.9" fill="none" stroke="#0a2c9c" stroke-width="2"/>
 <path d="M14 13.5L20.5 19.5" stroke="#0a2c9c" stroke-width="2.6" stroke-linecap="round"/>
 <path d="M16 4.7H21.3" stroke="#0a2c9c" stroke-width="1.6"/>
 <path d="M5.3 18.8H9.7M7.5 16.6V21" stroke="#0a2c9c" stroke-width="1.6"/>
</svg>
<svg style="left:652px;top:199px" width="14" height="14" viewBox="0 0 14 14">
 <path d="M0.7 0V13" stroke="#9a9a9a" stroke-width="1.3"/>
 <rect x="2" y="6" width="2" height="7" fill="#8a8a8a"/>
 <rect x="4" y="3" width="3" height="10" fill="#888"/>
 <rect x="7" y="4.5" width="2.5" height="8.5" fill="#8a8a8a"/>
 <rect x="9.5" y="8" width="2.5" height="5" fill="#8e8e8e"/>
 <path d="M0 13.2H13" stroke="#a8a8a8" stroke-width="0.8"/>
</svg>
<svg style="left:651px;top:225px" width="17" height="13" viewBox="0 0 17 13">
 <path d="M0.5 11.5H16.5" stroke="#a0a0a0" stroke-width="1"/>
 <path d="M1.5 11L5 1.5H6.5L9 11M9.5 1.5H16M10.5 2L12.5 10L14.5 2" fill="none" stroke="#a0a0a0" stroke-width="1"/>
</svg>
<div class="a" style="left:680px;top:110px;width:730px;height:397px;background:#fff;overflow:hidden">
 <svg style="left:0;top:0" width="730" height="397" viewBox="680 110 730 397">
  <path d="M1037.6 110L1410 110L1410 383.7L1350 378L1293 371.5L1220 362L1150 352L1100 344.3L1060 337L1020 328.2L980 318.8L942.5 310.2L896.6 295.8L895 289L896.6 283.7L903.2 282L903.8 271.5L913.2 258.8L924.4 244.6L943.3 218.2L977.3 180.5L1013 142.7Z" fill="#050505"/>
  <path d="M923.7 245.5H942.5V310.2L896.6 295.8L895 289L896.6 283.7L903.2 282L903.8 271.5L913.2 258.8Z" fill="#0a8a0a" stroke="#10d010" stroke-width="1"/>
  <path d="M942.5 246V310" stroke="#000" stroke-width="1" stroke-dasharray="1.5 1.5"/>
  <rect x="885.5" y="245.5" width="57.5" height="69.5" fill="none" stroke="#ecc85a" stroke-width="1"/>
  <path d="M893.5 110V507" stroke="#a83838" stroke-width="1.6"/>
  <path d="M680 293H1410" stroke="#a83838" stroke-width="1.6"/>
 </svg>
</div>
<div class="a" style="left:1100px;top:356px;width:195px;height:20px;background:#ffffe1;border:1px solid #222"></div>
<div class="t" style="left:1104px;top:360px;font-size:13px"><span style="font-size:12.7px">X 770.536,  Y 1,325.236  -  I 1.96</span></div>
<div class="a" style="left:679px;top:110px;width:731px;height:1px;background:#9a9a9a"></div>
<!-- v scrollbar -->
<div class="a" style="left:1410px;top:110px;width:19px;height:397px;background:#f0f0f0"></div>
<div class="a" style="left:1412px;top:335px;width:16px;height:46px;background:#cdcdcd"></div>
<svg style="left:1414px;top:116px" width="10" height="6" viewBox="0 0 10 6"><path d="M1 5.5L5 1.5L9 5.5" fill="none" stroke="#4a4a4a" stroke-width="2"/></svg>
<svg style="left:1414px;top:493px" width="10" height="6" viewBox="0 0 10 6"><path d="M1 0.5L5 4.5L9 0.5" fill="none" stroke="#4a4a4a" stroke-width="2"/></svg>
<!-- h scrollbar -->
<div class="a" style="left:679px;top:507px;width:750px;height:18px;background:#f0f0f0"></div>
<div class="a" style="left:834px;top:507px;width:141px;height:15px;background:#cdcdcd"></div>
<svg style="left:684px;top:511px" width="6" height="10" viewBox="0 0 6 10"><path d="M5.5 1L1.5 5L5.5 9" fill="none" stroke="#4a4a4a" stroke-width="2"/></svg>
<svg style="left:1398px;top:511px" width="6" height="10" viewBox="0 0 6 10"><path d="M0.5 1L4.5 5L0.5 9" fill="none" stroke="#4a4a4a" stroke-width="2"/></svg>

<!-- bottom setup panel -->
<div class="a" style="left:633px;top:536px;width:803px;height:197px;border:1px solid #a0a0a0;border-top:2px solid #7c7c7c;border-left:2px solid #7c7c7c;background:#f0f0f0"></div>
<div class="a" style="left:628px;top:733px;width:808px;height:5px;background:#fff"></div>

<!-- SETUP PANEL -->
<div class="a" style="left:641px;top:542px;width:86px;height:26px;background:#e1e1e1;border:1px solid #adadad"></div>
<div class="t" style="left:660px;top:548px">General</div>
<svg style="left:737px;top:548px" width="13" height="14" viewBox="0 0 13 14"><path d="M0.8 0.6V13.8L8 7.2Z" fill="#0b2a96" stroke="#0b2a96" stroke-width="1" stroke-linejoin="round"/><path d="M5.6 1.2L11.6 7.2L5.6 13.2" fill="none" stroke="#0a1f80" stroke-width="2.6"/></svg>
<div class="a" style="left:761px;top:542px;width:60px;height:26px;background:#e1e1e1;border:1px solid #adadad"></div>
<div class="t" style="left:779px;top:548px">ROI</div>
<svg style="left:831px;top:548px" width="13" height="14" viewBox="0 0 13 14"><path d="M0.8 0.6V13.8L8 7.2Z" fill="#0b2a96" stroke="#0b2a96" stroke-width="1" stroke-linejoin="round"/><path d="M5.6 1.2L11.6 7.2L5.6 13.2" fill="none" stroke="#0a1f80" stroke-width="2.6"/></svg>
<div class="a" style="left:854px;top:542px;width:93px;height:26px;background:#cce4f7;border:1px solid #2a6cb8"></div>
<div class="t" style="left:872px;top:548px">Pass/Fail</div>
<svg style="left:957px;top:548px" width="13" height="14" viewBox="0 0 13 14"><path d="M0.8 0.6V13.8L8 7.2Z" fill="#0b2a96" stroke="#0b2a96" stroke-width="1" stroke-linejoin="round"/><path d="M5.6 1.2L11.6 7.2L5.6 13.2" fill="none" stroke="#0a1f80" stroke-width="2.6"/></svg>
<div class="a" style="left:980px;top:542px;width:82px;height:26px;background:#e1e1e1;border:1px solid #adadad"></div>
<div class="t" style="left:999px;top:548px">Display</div>
<div class="t" style="left:646px;top:586px">Pass/Fail:</div>
<div class="t" style="left:707px;top:586px;color:#3cb93c">Passed</div>
<!-- filters group -->
<div class="a" style="left:646px;top:616px;width:361px;height:116px;border:1px solid #c2c2c2;border-bottom:none"></div>
<div class="a" style="left:651px;top:610px;width:40px;height:12px;background:#f0f0f0"></div>
<div class="t" style="left:653px;top:610px">Filters</div>
<div class="t" style="left:665px;top:637px">Feature</div>
<div class="t" style="left:769px;top:637px">Minimum</div>
<div class="t" style="left:856px;top:637px">Maximum</div>
<div class="t" style="left:943px;top:637px">Actual</div>
<div class="a" style="left:664px;top:660px;width:14px;height:14px;background:#fff;border:1px solid #333"></div>
<div class="t" style="left:682px;top:660px">Area</div>
<div class="a" style="left:766px;top:654px;width:58px;height:25px;border:1px solid #c8c8c8;background:#f0f0f0"></div>
<div class="t" style="left:795px;top:660px;transform:translateX(-50%);color:#b0b0b0;font-size:12px">0</div>
<div class="a" style="left:856px;top:654px;width:58px;height:25px;border:1px solid #c8c8c8;background:#f0f0f0"></div>
<div class="t" style="left:885px;top:660px;transform:translateX(-50%);color:#b0b0b0;font-size:12px">Infinity</div>
<div class="t" style="left:962px;top:660px;transform:translateX(-50%);color:#3cb93c">939</div>
<div class="a" style="left:664px;top:691px;width:14px;height:14px;background:#fff;border:1px solid #333"></div>
<div class="t" style="left:682px;top:691px">Width</div>
<div class="a" style="left:766px;top:685px;width:58px;height:25px;border:1px solid #c8c8c8;background:#f0f0f0"></div>
<div class="t" style="left:795px;top:691px;transform:translateX(-50%);color:#b0b0b0;font-size:12px">0</div>
<div class="a" style="left:856px;top:685px;width:58px;height:25px;border:1px solid #c8c8c8;background:#f0f0f0"></div>
<div class="t" style="left:885px;top:691px;transform:translateX(-50%);color:#b0b0b0;font-size:12px">Infinity</div>
<div class="t" style="left:961px;top:691px;transform:translateX(-50%);color:#3cb93c">32.0005526</div>
<div class="a" style="left:640px;top:710px;width:777px;height:23px;overflow:hidden">
 <div class="a" style="left:24px;top:11px;width:14px;height:14px;background:#fff;border:1px solid #333"></div>
 <div class="t" style="left:42px;top:11px">Height</div>
 <div class="a" style="left:126px;top:5px;width:58px;height:25px;border:1px solid #c8c8c8;background:#f0f0f0"></div>
 <div class="t" style="left:155px;top:11px;transform:translateX(-50%);color:#b0b0b0;font-size:12px">0</div>
 <div class="a" style="left:216px;top:5px;width:58px;height:25px;border:1px solid #c8c8c8;background:#f0f0f0"></div>
 <div class="t" style="left:245px;top:11px;transform:translateX(-50%);color:#b0b0b0;font-size:12px">Infinity</div>
 <div class="t" style="left:321px;top:11px;transform:translateX(-50%);color:#3cb93c">44.0002009</div>
 <div class="a" style="left:386px;top:15px;width:14px;height:14px;background:#fff;border:1px solid #333"></div>
 <div class="t" style="left:404px;top:15px">Enable Output Centroid List</div>
</div>
<!-- outputs group -->
<div class="a" style="left:1012px;top:616px;width:203px;height:116px;border:1px solid #c2c2c2;border-bottom:none"></div>
<div class="a" style="left:1017px;top:610px;width:50px;height:12px;background:#f0f0f0"></div>
<div class="t" style="left:1019px;top:610px">Outputs</div>
<div class="a" style="left:1026px;top:637px;width:14px;height:14px;background:#fff;border:1px solid #333"></div><svg style="left:1026px;top:637px" width="14" height="14" viewBox="0 0 14 14"><path d="M2.5 7L5.5 10L11.5 3" fill="none" stroke="#222" stroke-width="1.3"/></svg>
<div class="t" style="left:1044px;top:637px">Enable Output Blob List</div>
<div class="a" style="left:1026px;top:666px;width:14px;height:14px;background:#fff;border:1px solid #333"></div>
<div class="t" style="left:1044px;top:666px">Enable Output Area List</div>
<div class="a" style="left:1026px;top:696px;width:14px;height:14px;background:#fff;border:1px solid #333"></div>
<div class="t" style="left:1044px;top:696px">Enable Output Dim. Lists</div>
<!-- setup v scrollbar -->
<div class="a" style="left:1417px;top:538px;width:18px;height:194px;background:#f0f0f0;border-left:1px solid #fff"></div>
<div class="a" style="left:1419px;top:556px;width:15px;height:70px;background:#cdcdcd"></div>
<svg style="left:1420px;top:544px" width="10" height="6" viewBox="0 0 10 6"><path d="M1 5.5L5 1.5L9 5.5" fill="none" stroke="#4a4a4a" stroke-width="2"/></svg>
<svg style="left:1420px;top:719px" width="10" height="6" viewBox="0 0 10 6"><path d="M1 0.5L5 4.5L9 0.5" fill="none" stroke="#4a4a4a" stroke-width="2"/></svg>
<div class="a" style="left:633px;top:732px;width:803px;height:1px;background:#8a8a8a"></div>
<!-- bottom tabs -->
<div class="a" style="left:628px;top:733px;width:47px;height:31px;background:#fff"></div>
<div class="t" style="left:635px;top:746px">Setup</div>
<div class="a" style="left:675px;top:739px;width:71px;height:24px;background:#f0f0f0;border:1px solid #d9d9d9;border-bottom:none"></div>
<div class="t" style="left:681px;top:743px">Properties</div>
<div class="a" style="left:745px;top:739px;width:95px;height:24px;background:#f0f0f0;border:1px solid #d9d9d9;border-bottom:none"></div>
<div class="t" style="left:752px;top:743px">Link Summary</div>
<div class="a" style="left:839px;top:739px;width:31px;height:24px;background:#f0f0f0;border:1px solid #d9d9d9;border-bottom:none"></div>
<div class="t" style="left:846px;top:743px">Info</div>



</body></html>
